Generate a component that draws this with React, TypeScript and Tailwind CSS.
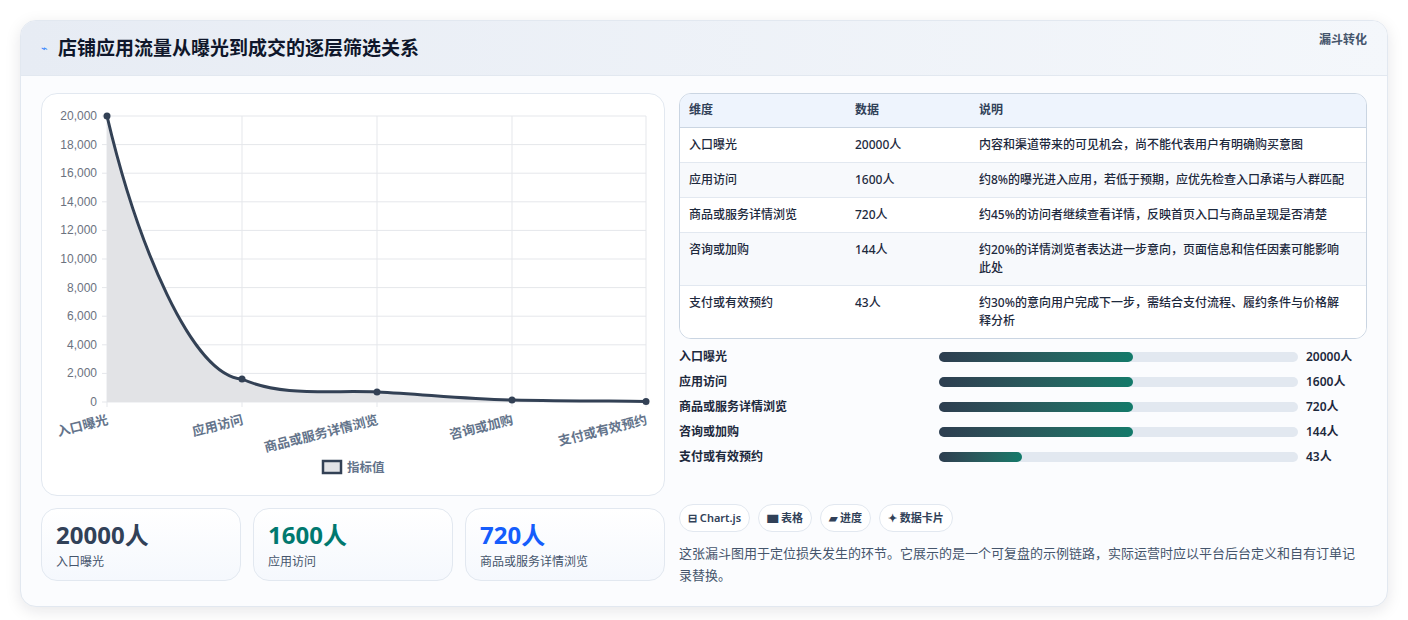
import React from "react"

const rows = [
  { d: "入口曝光", v: "20000人", n: "内容和渠道带来的可见机会，尚不能代表用户有明确购买意图" },
  { d: "应用访问", v: "1600人", n: "约8%的曝光进入应用，若低于预期，应优先检查入口承诺与人群匹配" },
  { d: "商品或服务详情浏览", v: "720人", n: "约45%的访问者继续查看详情，反映首页入口与商品呈现是否清楚" },
  { d: "咨询或加购", v: "144人", n: "约20%的详情浏览者表达进一步意向，页面信息和信任因素可能影响此处" },
  { d: "支付或有效预约", v: "43人", n: "约30%的意向用户完成下一步，需结合支付流程、履约条件与价格解释分析" },
]

const bars = [
  { l: "入口曝光", w: 54, v: "20000人" },
  { l: "应用访问", w: 54, v: "1600人" },
  { l: "商品或服务详情浏览", w: 54, v: "720人" },
  { l: "咨询或加购", w: 54, v: "144人" },
  { l: "支付或有效预约", w: 23, v: "43人" },
]

function Chart() {
  const xs = [65, 200, 335, 470, 604]
  const ys = [22, 285, 298, 306, 307.4]
  const labels = ["入口曝光", "应用访问", "商品或服务详情浏览", "咨询或加购", "支付或有效预约"]
  const ticks = [20000, 18000, 16000, 14000, 12000, 10000, 8000, 6000, 4000, 2000, 0]
  const line = "M65,22 C95,150 150,282 200,285 C240,303 290,296 335,298 C380,300 420,305 470,306 C520,307 560,307 604,307.4"
  return (
    <svg width="624" height="403" className="block" style={{ fontFamily: "'Liberation Sans','Noto Sans CJK SC',sans-serif" }}>
      {ticks.map((t, i) => {
        const y = 22 + i * 28.6
        return (
          <g key={t}>
            <line x1="60" x2="604" y1={y} y2={y} stroke="#e5e7eb" />
            <text x="55" y={y + 4} textAnchor="end" fontSize="12" fill="#6b7280">{t.toLocaleString("en-US")}</text>
          </g>
        )
      })}
      {xs.map((x) => (
        <line key={x} x1={x} x2={x} y1="22" y2="313" stroke="#e5e7eb" />
      ))}
      <path d={line + " L604,308 L65,308 Z"} fill="#e2e3e6" />
      <path d={line} fill="none" stroke="#334155" strokeWidth="3" />
      {xs.map((x, i) => (
        <circle key={x} cx={x} cy={ys[i]} r="3.5" fill="#334155" />
      ))}
      {labels.map((l, i) => (
        <text key={l} x={xs[i]} y="322" textAnchor="end" fontSize="13" fontWeight="600" fill="#64748b" transform={`rotate(-14 ${xs[i]} 322)`} dy="8">{l}</text>
      ))}
      <rect x="281" y="367" width="18" height="12" fill="#e2e3e6" stroke="#334155" strokeWidth="2.5" />
      <text x="305" y="378" fontSize="12.5" fontWeight="600" fill="#64748b">指标值</text>
    </svg>
  )
}

export default function App() {
  return (
    <div className="min-h-[620px] bg-white p-5" style={{ fontFamily: "'Noto Sans','Noto Sans CJK SC',sans-serif" }}>
      <div className="overflow-hidden rounded-2xl border border-slate-200 bg-[#fbfcfe] shadow-[0_4px_16px_rgba(15,23,42,0.1)]">
        <div className="flex h-[55px] items-center justify-between border-b border-slate-200 bg-gradient-to-r from-[#e7ecf4] to-[#f4f7fb] px-5">
          <div className="flex items-center gap-2.5">
            <span className="text-[11px] text-blue-500">⌁</span>
            <h1 className="text-[19px] font-bold text-slate-900">店铺应用流量从曝光到成交的逐层筛选关系</h1>
          </div>
          <span className="-mt-4 text-[12px] font-semibold text-slate-600">漏斗转化</span>
        </div>
        <div className="flex gap-[14px] px-5 pb-5 pt-[17px]">
          <div className="flex w-[624px] shrink-0 flex-col gap-3">
            <div className="h-[403px] rounded-2xl border border-slate-200 bg-white">
              <Chart />
            </div>
            <div className="grid grid-cols-3 gap-3">
              {[
                ["20000人", "入口曝光", "text-slate-700"],
                ["1600人", "应用访问", "text-teal-700"],
                ["720人", "商品或服务详情浏览", "text-blue-600"],
              ].map(([v, l, c]) => (
                <div key={l} className="h-[73px] rounded-2xl border border-slate-200 bg-gradient-to-b from-white to-[#f5f8fd] px-[14px] pt-2.5">
                  <div className={`text-[24px] font-bold leading-8 ${c}`}>{v}</div>
                  <div className="mt-0.5 text-[12px] text-slate-600">{l}</div>
                </div>
              ))}
            </div>
          </div>
          <div className="flex flex-1 flex-col">
            <div className="overflow-hidden rounded-xl border border-slate-300">
              <table className="w-full text-[12px] text-slate-800">
                <thead>
                  <tr className="h-[33px] border-b border-slate-300 bg-[#eef4fd] text-left text-slate-700">
                    <th className="w-[175px] pl-[9px] font-semibold">维度</th>
                    <th className="w-[124px] font-semibold">数据</th>
                    <th className="font-semibold">说明</th>
                  </tr>
                </thead>
                <tbody>
                  {rows.map((r, i) => (
                    <tr key={r.d} className={`${i < 4 ? "border-b border-slate-200" : ""} ${i % 2 ? "bg-[#f7f9fc]" : "bg-white"}`}>
                      <td className="py-[8px] pl-[9px] align-top leading-[18px] font-medium">{r.d}</td>
                      <td className="py-[8px] align-top leading-[18px] font-medium">{r.v}</td>
                      <td className="py-[8px] pr-4 align-top leading-[18px] font-medium">{r.n}</td>
                    </tr>
                  ))}
                </tbody>
              </table>
            </div>
            <div className="mt-[9px] flex flex-col gap-[7px]">
              {bars.map((b) => (
                <div key={b.l} className="flex h-[18px] items-center text-[12px] font-semibold text-slate-800">
                  <span className="w-[260px]">{b.l}</span>
                  <div className="h-[10px] w-[359px] rounded-full bg-slate-200">
                    <div className="h-full rounded-full bg-gradient-to-r from-[#2d3e50] to-[#127a6a]" style={{ width: `${b.w}%` }} />
                  </div>
                  <span className="ml-2">{b.v}</span>
                </div>
              ))}
            </div>
            <div className="mt-[38px] flex gap-[8px] text-[11px] font-semibold text-slate-700">
              {["⊟ Chart.js", "▆ 表格", "▰ 进度", "✦ 数据卡片"].map((t) => (
                <span key={t} className="rounded-full border border-slate-200 bg-white px-[8px] py-[5px]">{t}</span>
              ))}
            </div>
            <p className="mt-[10px] text-[13px] leading-[22px] text-slate-600">
              这张漏斗图用于定位损失发生的环节。它展示的是一个可复盘的示例链路，实际运营时应以平台后台定义和自有订单记录替换。
            </p>
          </div>
        </div>
      </div>
    </div>
  )
}
